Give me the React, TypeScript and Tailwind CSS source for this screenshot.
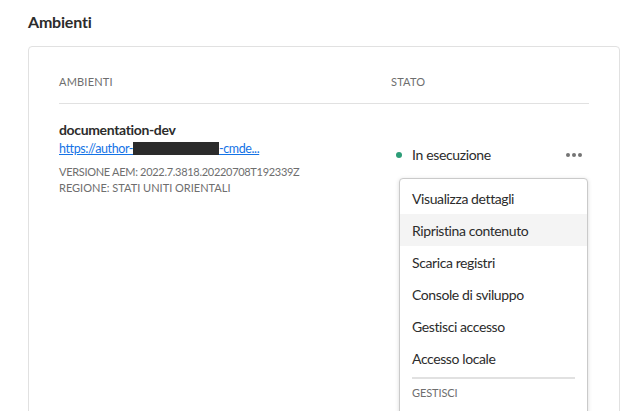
import React from "react";

const menuItems = [
  "Visualizza dettagli",
  "Ripristina contenuto",
  "Scarica registri",
  "Console di sviluppo",
  "Gestisci accesso",
  "Accesso locale",
];

export default function App() {
  return (
    <div className="relative w-[632px] h-[411px] overflow-hidden bg-white font-['Lato',sans-serif] text-[#2c2c2c]">
      <div className="px-[28px] pt-[12px]">
        <h2 className="text-[16px] leading-[20px] font-bold tracking-[-0.2px]">Ambienti</h2>
        <div className="mt-[14px] h-[500px] w-[592px] rounded-[4px] border border-[#e1e1e1] px-[30px] pt-[15px]">
          <div className="grid h-[42px] grid-cols-[332px_1fr] items-center border-b border-[#e1e1e1] text-[11px] tracking-[0.2px] text-[#6e6e6e]">
            <div>AMBIENTI</div>
            <div>STATO</div>
          </div>
          <div className="grid grid-cols-[332px_1fr] pt-[17px]">
            <div>
              <div className="text-[14px] leading-[18px] font-bold tracking-[-0.35px]">documentation-dev</div>
              <div className="mt-[1px] text-[12.5px] leading-[16px] tracking-[-0.4px] text-[#1473e6] underline">
                https://author-
                <span className="inline-block h-[13px] w-[86px] translate-y-[2px] bg-[#2b2b2b] align-baseline"></span>
                -cmde...
              </div>
              <div className="mt-[7px] text-[11px] leading-[16px] tracking-[-0.3px] text-[#6e6e6e]">
                VERSIONE AEM: 2022.7.3818.20220708T192339Z
              </div>
              <div className="text-[11px] leading-[16px] text-[#6e6e6e]">REGIONE: STATI UNITI ORIENTALI</div>
            </div>
            <div className="relative">
              <div className="mt-[25px] flex h-[18px] items-center">
                <span className="ml-[5px] h-[6px] w-[6px] rounded-full bg-[#2d9d78]"></span>
                <span className="ml-[10px] text-[14px] leading-[18px] tracking-[-0.35px]">In esecuzione</span>
                <span className="ml-auto mr-[7px] flex gap-[2px]">
                  <span className="h-[4px] w-[4px] rounded-full bg-[#747474]"></span>
                  <span className="h-[4px] w-[4px] rounded-full bg-[#747474]"></span>
                  <span className="h-[4px] w-[4px] rounded-full bg-[#747474]"></span>
                </span>
              </div>
              <div className="absolute left-[8px] top-[57px] w-[189px] rounded-[4px] border border-[#cacaca] bg-white pt-[3px] shadow-[0_1px_4px_rgba(0,0,0,0.15)]">
                {menuItems.map((m, i) => (
                  <div
                    key={m}
                    className={`flex h-[32px] items-center px-[12px] text-[14px] tracking-[-0.4px] ${i === 1 ? "bg-[#f4f4f4]" : ""}`}
                  >
                    {m}
                  </div>
                ))}
                <div className="mx-[12px] mt-[3px] h-[2px] bg-[#e1e1e1]"></div>
                <div className="px-[12px] pt-[6px] pb-[20px] text-[11px] tracking-[-0.1px] text-[#6e6e6e]">GESTISCI</div>
              </div>
            </div>
          </div>
        </div>
      </div>
    </div>
  );
}
